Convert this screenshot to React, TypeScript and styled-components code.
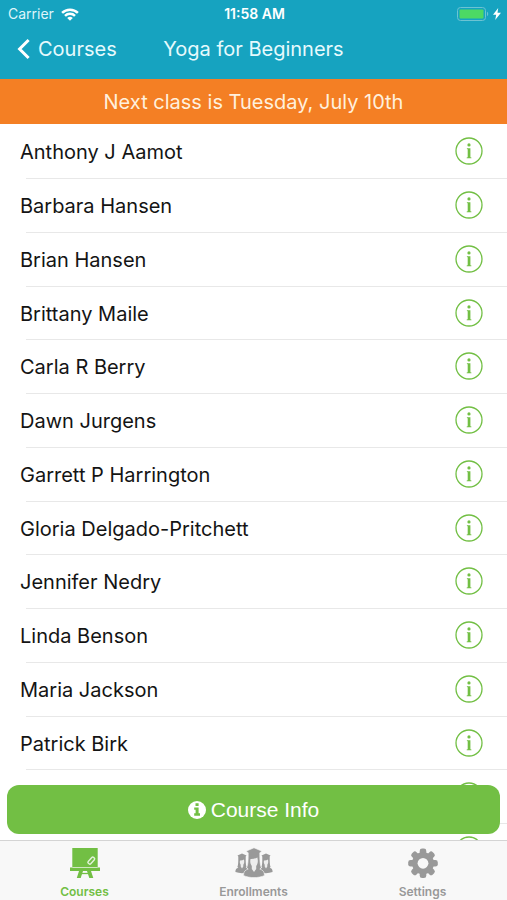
import React from "react";
import styled, { createGlobalStyle } from "styled-components";

const teal = "#16a3c0";
const orange = "#f47f24";
const green = "#72bf44";
const grey = "#999999";

const GlobalStyle = createGlobalStyle`
  *, *::before, *::after { box-sizing: border-box; }
  html, body, #root { height: 100%; margin: 0; }
  body {
    font-family: Inter, "Liberation Sans", sans-serif;
    background: #ffffff;
    color: #141414;
  }
  button { font: inherit; border: 0; margin: 0; padding: 0; background: none; cursor: pointer; }
  svg { display: block; flex: none; }
`;

const Screen = styled.div`
  display: flex;
  flex-direction: column;
  height: 100%;
  overflow: hidden;
`;

const Header = styled.header`
  flex: none;
  background: ${teal};
  color: #ffffff;
  padding-bottom: 9px;
`;

const StatusBar = styled.div`
  display: grid;
  grid-template-columns: 1fr auto 1fr;
  align-items: center;
  height: 28px;
  padding: 0 6px 0 8px;
  font-size: 14px;
  line-height: 18px;
`;

const Carrier = styled.div`
  display: flex;
  align-items: center;
  gap: 7px;
  color: #dff5fa;
`;

const Clock = styled.div`
  font-weight: 600;
`;

const Power = styled.div`
  display: flex;
  align-items: center;
  justify-content: flex-end;
  gap: 4px;
`;

const NavBar = styled.nav`
  display: grid;
  grid-template-columns: 1fr auto 1fr;
  align-items: center;
  height: 42px;
  padding: 0 17px;
`;

const BackLink = styled.a`
  display: flex;
  align-items: center;
  gap: 8px;
  color: #e6fafd;
  font-size: 20px;
  line-height: 24px;
  text-decoration: none;
`;

const Title = styled.h1`
  margin: 0;
  color: #e6fafd;
  font-size: 20px;
  line-height: 24px;
  font-weight: 400;
`;

const Banner = styled.div`
  flex: none;
  height: 45px;
  background: ${orange};
  color: #fff0dd;
  font-size: 20px;
  line-height: 46px;
  text-align: center;
`;

const Content = styled.main`
  position: relative;
  flex: 1;
  min-height: 0;
  overflow: hidden;
`;

const List = styled.ul`
  margin: 0;
  padding: 1px 0 0;
  list-style: none;
`;

const Row = styled.li`
  display: flex;
  align-items: center;
  justify-content: space-between;
  height: 54px;
  padding: 0 24px 0 20px;
  font-size: 20px;
  line-height: 24px;
  background: linear-gradient(#e8e8e8, #e8e8e8) 26px 100% / 100% 1px no-repeat;

  &:nth-child(4n) {
    height: 53px;
  }
`;

const InfoButton = styled.button`
  && {
    padding-bottom: 2px;
    color: ${green};
  }
`;

const CourseInfoButton = styled.button`
  && {
    position: absolute;
    left: 7px;
    right: 7px;
    bottom: 6px;
    display: flex;
    align-items: center;
    justify-content: center;
    gap: 5px;
    height: 49px;
    padding-top: 1px;
    border-radius: 12px;
    background: ${green};
    color: #ffffff;
    font-family: "Liberation Sans", Arial, sans-serif;
    font-size: 21px;
    line-height: 24px;
  }
`;

const TabBar = styled.nav`
  flex: none;
  display: grid;
  grid-template-columns: repeat(3, 1fr);
  height: 60px;
  border-top: 1px solid #d4d4d4;
  background: #f8f8f8;
`;

const Tab = styled.a<{ $active?: boolean }>`
  display: flex;
  flex-direction: column;
  align-items: center;
  gap: 5px;
  padding-top: 6px;
  color: ${(p) => (p.$active ? green : grey)};
  font-size: 12px;
  line-height: 16px;
  font-weight: 600;
  text-decoration: none;
`;

const WifiIcon = () => (
  <svg width="18" height="13" viewBox="0 0 18 13" fill="none" stroke="#fff" strokeWidth="2.5" aria-hidden="true">
    <path d="M1.1 4.9a11.2 11.2 0 0 1 15.8 0" />
    <path d="M4 7.9a7.1 7.1 0 0 1 10 0" />
    <path d="M9 12.8 6.2 10a4 4 0 0 1 5.6 0z" fill="#fff" stroke="none" />
  </svg>
);

const BatteryIcon = () => (
  <svg width="32" height="14" viewBox="0 0 32 14" aria-hidden="true">
    <rect x="0.5" y="0.5" width="28" height="13" rx="3" fill="none" stroke="#6cc3d3" />
    <rect x="2.5" y="2.5" width="24" height="9" rx="1" fill="#4cd964" />
    <path d="M30 4.8c1.6.6 1.6 3.8 0 4.4z" fill="#6cc3d3" />
  </svg>
);

const BoltIcon = () => (
  <svg width="8" height="12" viewBox="0 0 8 12" fill="#fff" aria-hidden="true">
    <path d="M5.2 0 0 6.8h3.2L2.2 12 8 4.8H4.5z" />
  </svg>
);

const ChevronIcon = () => (
  <svg width="13" height="22" viewBox="0 0 13 22" fill="none" stroke="#fff" strokeWidth="3" aria-hidden="true">
    <path d="M11.6 2 2.6 11l9 9" />
  </svg>
);

const InfoIcon = () => (
  <svg width="28" height="28" viewBox="0 0 28 28" aria-hidden="true">
    <circle cx="14" cy="14" r="13" fill="none" stroke="currentColor" strokeWidth="1.3" />
    <circle cx="14" cy="7.9" r="1.6" fill="currentColor" />
    <path d="M11.9 11.2h3.5v9l1 .3v.7h-4.700v-.7l1-.3v-8l-.8-.3z" fill="currentColor" />
  </svg>
);

const SolidInfoIcon = () => (
  <svg width="18" height="18" viewBox="0 0 18 18" aria-hidden="true">
    <circle cx="9" cy="9" r="9" fill="#fff" />
    <path d="M7.500 2.300h3.100v2.600H7.500zM6.200 6.400h4.400v5.900H12v2.400H6.200v-2.400h1.400V8.800H6.200z" fill={green} />
  </svg>
);

const BoardIcon = () => (
  <svg width="30" height="32" viewBox="0 0 30 32" aria-hidden="true">
    <path d="M2.3 1h25.4v19.500H30v3.600H0v-3.600h2.300z" fill="currentColor" />
    <path d="M2.300 20.500h25.400" stroke="#f8f8f8" strokeWidth=".7" />
    <path d="M9 24h4l-2.300 7H6.800zM17 24h4l2.300 7h-4z" fill="currentColor" />
    <path d="M11.500 26.500h7" stroke="currentColor" strokeWidth="1.3" />
    <rect x="-1.700" y="-3.900" width="3.400" height="7.800" rx="1.200" transform="translate(21.300 13.600) rotate(42)" fill="none" stroke="#e4f2dc" strokeWidth="1.400" />
  </svg>
);

const GroupIcon = () => (
  <svg width="38" height="32" viewBox="0 0 38 32" fill="currentColor" aria-hidden="true">
    {[0, 24].map((x) => (
      <g key={x} transform={`translate(${x} 0)`}>
        <path d="M7 6.500 11.500 8.600 10.700 9.600v3.600c.1 2.600.1 4.600.9 6.700l-.9.900c1.900.6 2.900 1.600 2.900 4.200-4 1.500-9.200 1.500-13.200 0 0-2.600 1-3.600 2.900-4.200l-.9-.9c.8-2.100.8-4.100.9-6.700V9.600L2.500 8.600z" />
        <path d="M5 13.600c1.600.1 2.900-.3 4-1 .5 2.600.2 4.100-.7 5.200v1.800L7 21.400l-1.300-1.800v-1.800C4.800 16.700 4.600 15.300 5 13.600z" fill="#ededed" />
      </g>
    ))}
    <path
      d="M19 .800 27 4.200 24.800 5.700v4.600c.2 4.200.2 7.200 1.500 10.500l-1.500 1.300c2.900.9 4.700 2.300 4.700 6.400-5.900 2.800-15.100 2.800-21 0 0-4.100 1.800-5.500 4.700-6.400l-1.500-1.300c1.300-3.300 1.300-6.300 1.500-10.500V5.700L11 4.200z"
      stroke="#f8f8f8"
      strokeWidth=".6"
    />
    <path d="M15.500 12c2.700.1 5-.5 6.900-1.600.9 4.300.3 6.700-1.200 8.500v3L19 24.900l-2.200-3v-3c-1.500-1.800-1.900-4.100-1.300-6.900z" fill="#ededed" />
  </svg>
);

const GearIcon = () => (
  <svg width="30" height="32" viewBox="0 0 30 32" fill="currentColor" aria-hidden="true">
    {[0, 45, 90, 135].map((angle) => (
      <rect key={angle} x="11.700" y="1.500" width="6.600" height="29.600" rx="2.400" transform={`rotate(${angle} 15 16.300)`} />
    ))}
    <circle cx="15" cy="16.300" r="11" />
    <circle cx="15" cy="16.300" r="5.400" fill="#f8f8f8" />
  </svg>
);

const students = [
  "Anthony J Aamot",
  "Barbara Hansen",
  "Brian Hansen",
  "Brittany Maile",
  "Carla R Berry",
  "Dawn Jurgens",
  "Garrett P Harrington",
  "Gloria Delgado-Pritchett",
  "Jennifer Nedry",
  "Linda Benson",
  "Maria Jackson",
  "Patrick Birk",
  "",
  "",
];

const tabs = [
  { label: "Courses", Icon: BoardIcon, active: true },
  { label: "Enrollments", Icon: GroupIcon, active: false },
  { label: "Settings", Icon: GearIcon, active: false },
];

export default function App() {
  return (
    <Screen>
      <GlobalStyle />
      <Header>
        <StatusBar>
          <Carrier>
            Carrier
            <WifiIcon />
          </Carrier>
          <Clock>11:58 AM</Clock>
          <Power>
            <BatteryIcon />
            <BoltIcon />
          </Power>
        </StatusBar>
        <NavBar aria-label="Course">
          <BackLink href="#courses">
            <ChevronIcon />
            Courses
          </BackLink>
          <Title>Yoga for Beginners</Title>
        </NavBar>
      </Header>
      <Banner>Next class is Tuesday, July 10th</Banner>
      <Content>
        <List>
          {students.map((name, index) => (
            <Row key={index}>
              <span>{name}</span>
              <InfoButton type="button" aria-label={`Details ${name}`.trim()}>
                <InfoIcon />
              </InfoButton>
            </Row>
          ))}
        </List>
        <CourseInfoButton type="button">
          <SolidInfoIcon />
          Course Info
        </CourseInfoButton>
      </Content>
      <TabBar aria-label="Main">
        {tabs.map(({ label, Icon, active }) => (
          <Tab key={label} href={`#${label.toLowerCase()}`} $active={active} aria-current={active ? "page" : undefined}>
            <Icon />
            {label}
          </Tab>
        ))}
      </TabBar>
    </Screen>
  );
}
